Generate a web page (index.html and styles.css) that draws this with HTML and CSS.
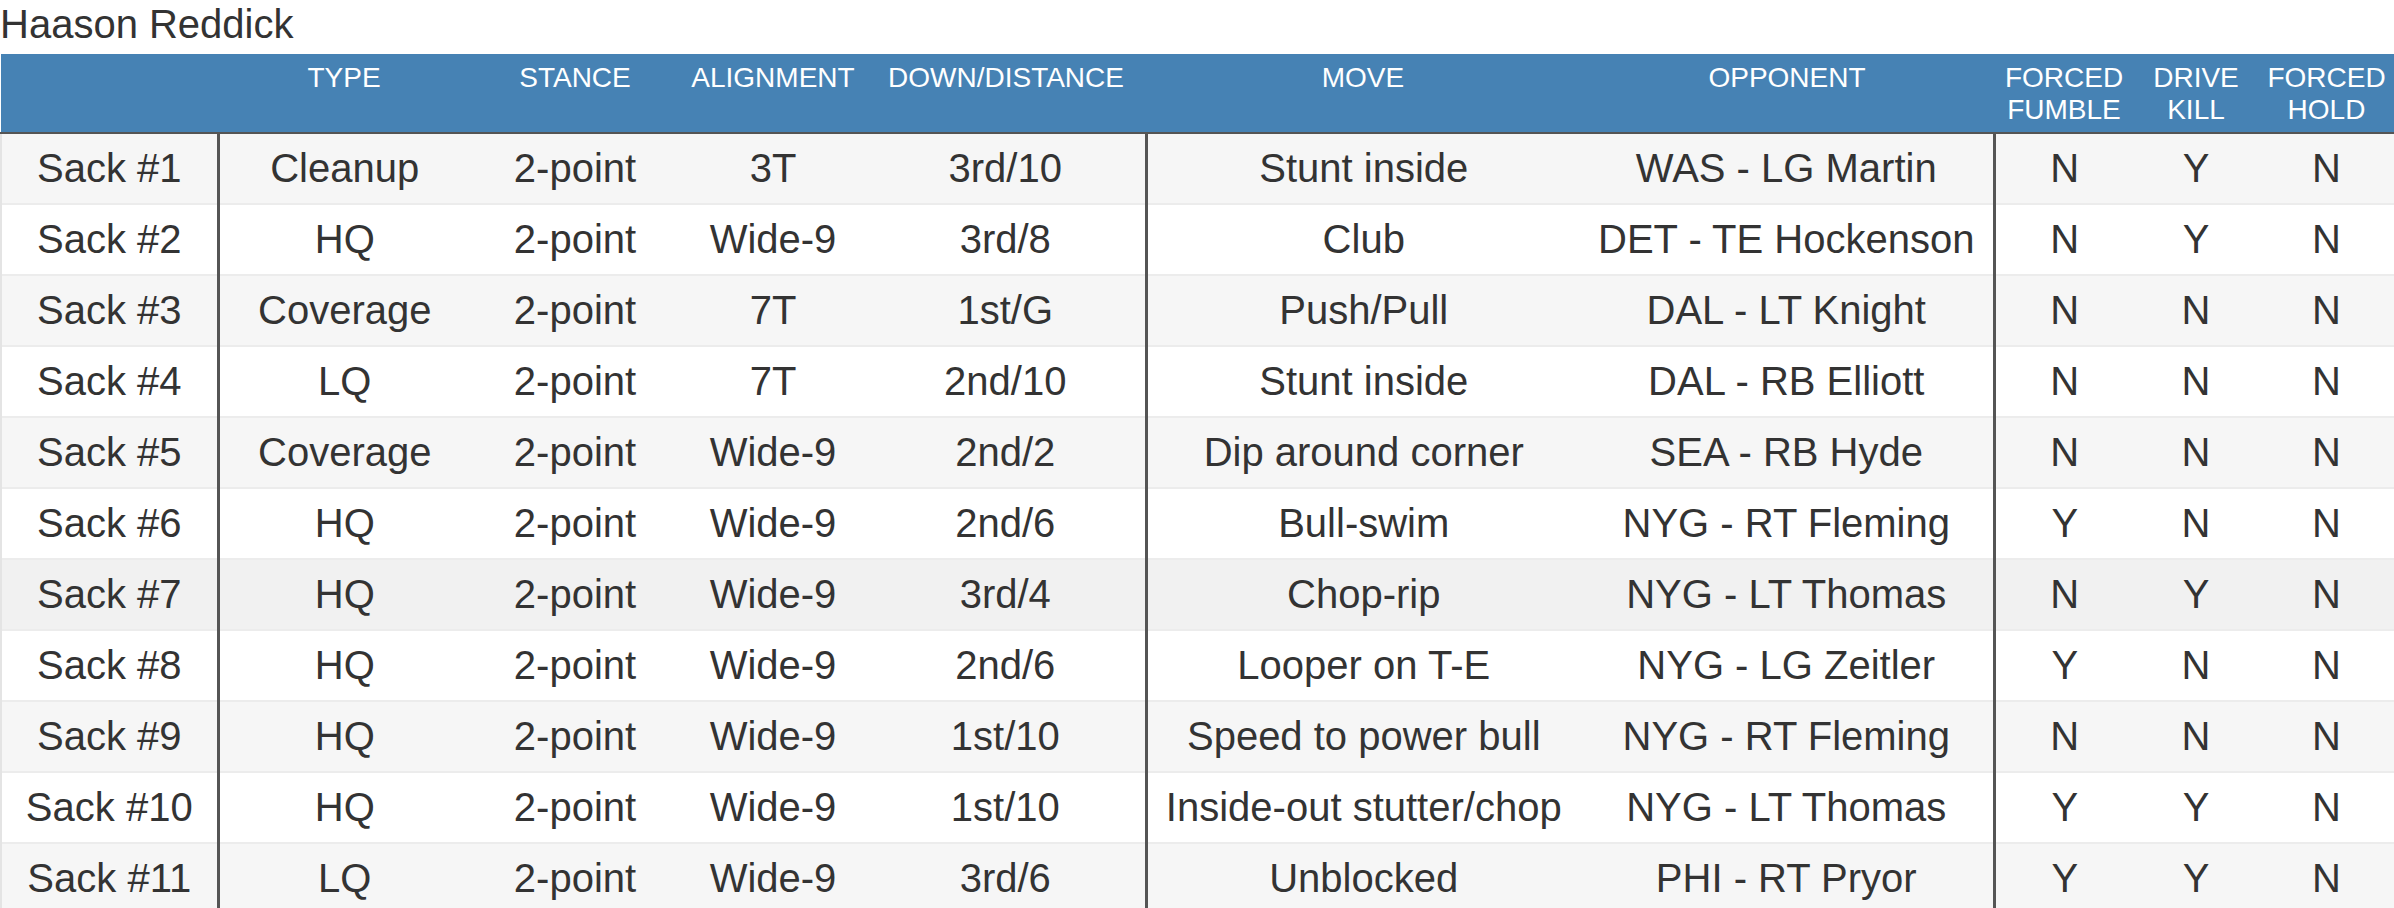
FILE: index.html
```html
<!DOCTYPE html>
<html>
<head>
<meta charset="utf-8">
<title>Haason Reddick</title>
<link rel="stylesheet" href="styles.css">
</head>
<body>
<h1 class="player-name">Haason Reddick</h1>
<table class="sack-table">
  <colgroup>
    <col class="c-label"><col class="c-type"><col class="c-stance"><col class="c-align"><col class="c-down">
    <col class="c-move"><col class="c-opp"><col class="c-ff"><col class="c-dk"><col class="c-fh">
  </colgroup>
  <thead>
    <tr>
      <th></th>
      <th>TYPE</th>
      <th>STANCE</th>
      <th>ALIGNMENT</th>
      <th>DOWN/DISTANCE</th>
      <th>MOVE</th>
      <th>OPPONENT</th>
      <th>FORCED<br>FUMBLE</th>
      <th>DRIVE<br>KILL</th>
      <th>FORCED<br>HOLD</th>
    </tr>
  </thead>
  <tbody>
    <tr><td>Sack #1</td><td class="sep">Cleanup</td><td>2-point</td><td>3T</td><td>3rd/10</td><td class="sep">Stunt inside</td><td>WAS - LG Martin</td><td class="sep">N</td><td>Y</td><td>N</td></tr>
    <tr><td>Sack #2</td><td class="sep">HQ</td><td>2-point</td><td>Wide-9</td><td>3rd/8</td><td class="sep">Club</td><td>DET - TE Hockenson</td><td class="sep">N</td><td>Y</td><td>N</td></tr>
    <tr><td>Sack #3</td><td class="sep">Coverage</td><td>2-point</td><td>7T</td><td>1st/G</td><td class="sep">Push/Pull</td><td>DAL - LT Knight</td><td class="sep">N</td><td>N</td><td>N</td></tr>
    <tr><td>Sack #4</td><td class="sep">LQ</td><td>2-point</td><td>7T</td><td>2nd/10</td><td class="sep">Stunt inside</td><td>DAL - RB Elliott</td><td class="sep">N</td><td>N</td><td>N</td></tr>
    <tr><td>Sack #5</td><td class="sep">Coverage</td><td>2-point</td><td>Wide-9</td><td>2nd/2</td><td class="sep">Dip around corner</td><td>SEA - RB Hyde</td><td class="sep">N</td><td>N</td><td>N</td></tr>
    <tr><td>Sack #6</td><td class="sep">HQ</td><td>2-point</td><td>Wide-9</td><td>2nd/6</td><td class="sep">Bull-swim</td><td>NYG - RT Fleming</td><td class="sep">Y</td><td>N</td><td>N</td></tr>
    <tr class="is-hover"><td>Sack #7</td><td class="sep">HQ</td><td>2-point</td><td>Wide-9</td><td>3rd/4</td><td class="sep">Chop-rip</td><td>NYG - LT Thomas</td><td class="sep">N</td><td>Y</td><td>N</td></tr>
    <tr><td>Sack #8</td><td class="sep">HQ</td><td>2-point</td><td>Wide-9</td><td>2nd/6</td><td class="sep">Looper on T-E</td><td>NYG - LG Zeitler</td><td class="sep">Y</td><td>N</td><td>N</td></tr>
    <tr><td>Sack #9</td><td class="sep">HQ</td><td>2-point</td><td>Wide-9</td><td>1st/10</td><td class="sep">Speed to power bull</td><td>NYG - RT Fleming</td><td class="sep">N</td><td>N</td><td>N</td></tr>
    <tr><td>Sack #10</td><td class="sep">HQ</td><td>2-point</td><td>Wide-9</td><td>1st/10</td><td class="sep">Inside-out stutter/chop</td><td>NYG - LT Thomas</td><td class="sep">Y</td><td>Y</td><td>N</td></tr>
    <tr><td>Sack #11</td><td class="sep">LQ</td><td>2-point</td><td>Wide-9</td><td>3rd/6</td><td class="sep">Unblocked</td><td>PHI - RT Pryor</td><td class="sep">Y</td><td>Y</td><td>N</td></tr>
  </tbody>
</table>
</body>
</html>
```
FILE: styles.css
```css
html, body {
  margin: 0;
  padding: 0;
  background: #fff;
  overflow: hidden;
}
body {
  font-family: "Liberation Sans", Arial, Helvetica, sans-serif;
  color: #333;
}
.player-name {
  margin: 0 0 6px 0;
  font-size: 40px;
  font-weight: normal;
  line-height: 48px;
  color: #333;
}
.sack-table {
  width: 2394px;
  table-layout: fixed;
  border-collapse: collapse;
  border-spacing: 0;
}
.c-label { width: 217px; }
.c-type { width: 252px; }
.c-stance { width: 210px; }
.c-align { width: 186px; }
.c-down { width: 280px; }
.c-move { width: 434px; }
.c-opp { width: 414px; }
.c-ff { width: 140px; }
.c-dk { width: 124px; }
.c-fh { width: 137px; }

.sack-table th {
  background: #4682b4;
  color: #fff;
  font-weight: normal;
  font-size: 28px;
  line-height: 32px;
  padding: 8px 4px 6px;
  text-align: center;
  vertical-align: top;
  border-bottom: 2px solid #555;
  white-space: nowrap;
}
.sack-table td {
  font-size: 40px;
  line-height: 53px;
  padding: 8px 4px;
  text-align: center;
  vertical-align: middle;
  border-top: 2px solid #ececec;
  white-space: nowrap;
}
.sack-table tbody td:first-child {
  border-left: 2px solid #e4e4e4;
}
.sack-table tbody td.sep {
  border-left: 3px solid #555;
}
.sack-table tbody tr:nth-child(odd) td {
  background: #f6f6f6;
}
.sack-table tbody tr:nth-child(even) td {
  background: #fff;
}
.sack-table tbody tr.is-hover td {
  background: #f1f1f1;
}
```
